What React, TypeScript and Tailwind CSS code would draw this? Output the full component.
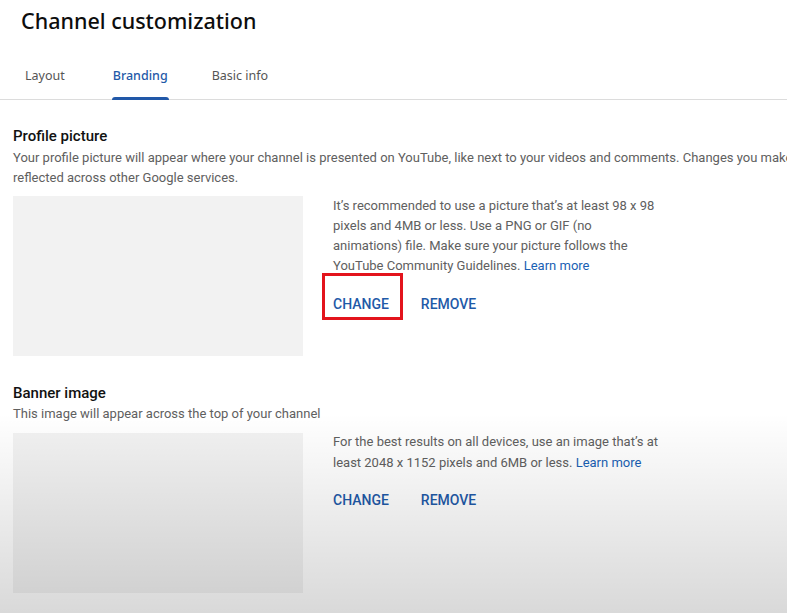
import React from "react";

const body = { fontFamily: "Roboto, 'Liberation Sans', sans-serif" };
const head = { fontFamily: "'Noto Sans', 'Open Sans', sans-serif" };

function Actions({ boxed }: { boxed?: boolean }) {
  return (
    <div className="flex items-center gap-[32px] text-[14px] font-medium text-[#1f5aa8]">
      <div className="relative">
        {boxed && (
          <div className="absolute left-[-11px] top-[-21px] h-[47px] w-[81px] border-[3px] border-[#e3141c]" />
        )}
        <span>CHANGE</span>
      </div>
      <span>REMOVE</span>
    </div>
  );
}

export default function App() {
  return (
    <div className="relative h-[613px] w-[787px] overflow-hidden bg-white" style={body}>
      {/* Header */}
      <div className="pl-[21px] pt-[6px]" style={head}>
        <h1 className="text-[21.5px] font-medium leading-[30px] text-[#0d0d0d]">Channel customization</h1>
      </div>

      {/* Tabs */}
      <div className="mt-[31px] flex border-b border-[#dcdcdc] pl-[25px] text-[12.5px]" style={head}>
        <div className="pb-[13px] text-[#555]">Layout</div>
        <div className="relative ml-[48px] pb-[13px] font-medium text-[#1f5aa8]">
          Branding
          <div className="absolute bottom-[-1px] left-[-1px] right-[-1px] h-[3px] rounded-t-sm bg-[#2158a8]" />
        </div>
        <div className="ml-[44px] pb-[13px] text-[#555]">Basic info</div>
      </div>

      <div className="px-[13px]">
        {/* Profile picture */}
        <section className="pt-[26px]">
          <h2 className="text-[15px] font-medium leading-5 text-[#111]">Profile picture</h2>
          <p className="mt-[2px] text-[13px] leading-5 text-[#606060]">
            <span className="block whitespace-nowrap">
              Your profile picture will appear where your channel is presented on YouTube, like next to your videos and comments. Changes you make here will be
            </span>
            <span className="block">reflected across other Google services.</span>
          </p>
          <div className="mt-[8px] flex">
            <div className="h-[160px] w-[290px] bg-[#f2f2f2]" />
            <div className="ml-[30px]">
              <p className="w-[330px] text-[13px] leading-5 text-[#606060]">
                It’s recommended to use a picture that’s at least 98 x 98 pixels and 4MB or less. Use a PNG or GIF (no
                animations) file. Make sure your picture follows the YouTube Community Guidelines.{" "}
                <span className="text-[#1a5fb4]">Learn more</span>
              </p>
              <div className="mt-[18px]">
                <Actions boxed />
              </div>
            </div>
          </div>
        </section>

        {/* Banner image */}
        <section className="pt-[27px]">
          <h2 className="text-[15px] font-medium leading-5 text-[#111]">Banner image</h2>
          <p className="mt-[1px] text-[13px] leading-5 text-[#606060]">This image will appear across the top of your channel</p>
          <div className="mt-[9px] flex">
            <div className="h-[160px] w-[290px] bg-[#f2f2f2]" />
            <div className="ml-[30px]">
              <p className="-mt-[2px] w-[340px] text-[13px] leading-[21px] text-[#606060]">
                For the best results on all devices, use an image that’s at least 2048 x 1152 pixels and 6MB or less.{" "}
                <span className="text-[#1a5fb4]">Learn more</span>
              </p>
              <div className="mt-[17px]">
                <Actions />
              </div>
            </div>
          </div>
        </section>
      </div>

      {/* bottom shading overlay */}
      <div className="pointer-events-none absolute inset-x-0 bottom-0 h-[200px] bg-gradient-to-b from-transparent to-black/15" />
    </div>
  );
}
